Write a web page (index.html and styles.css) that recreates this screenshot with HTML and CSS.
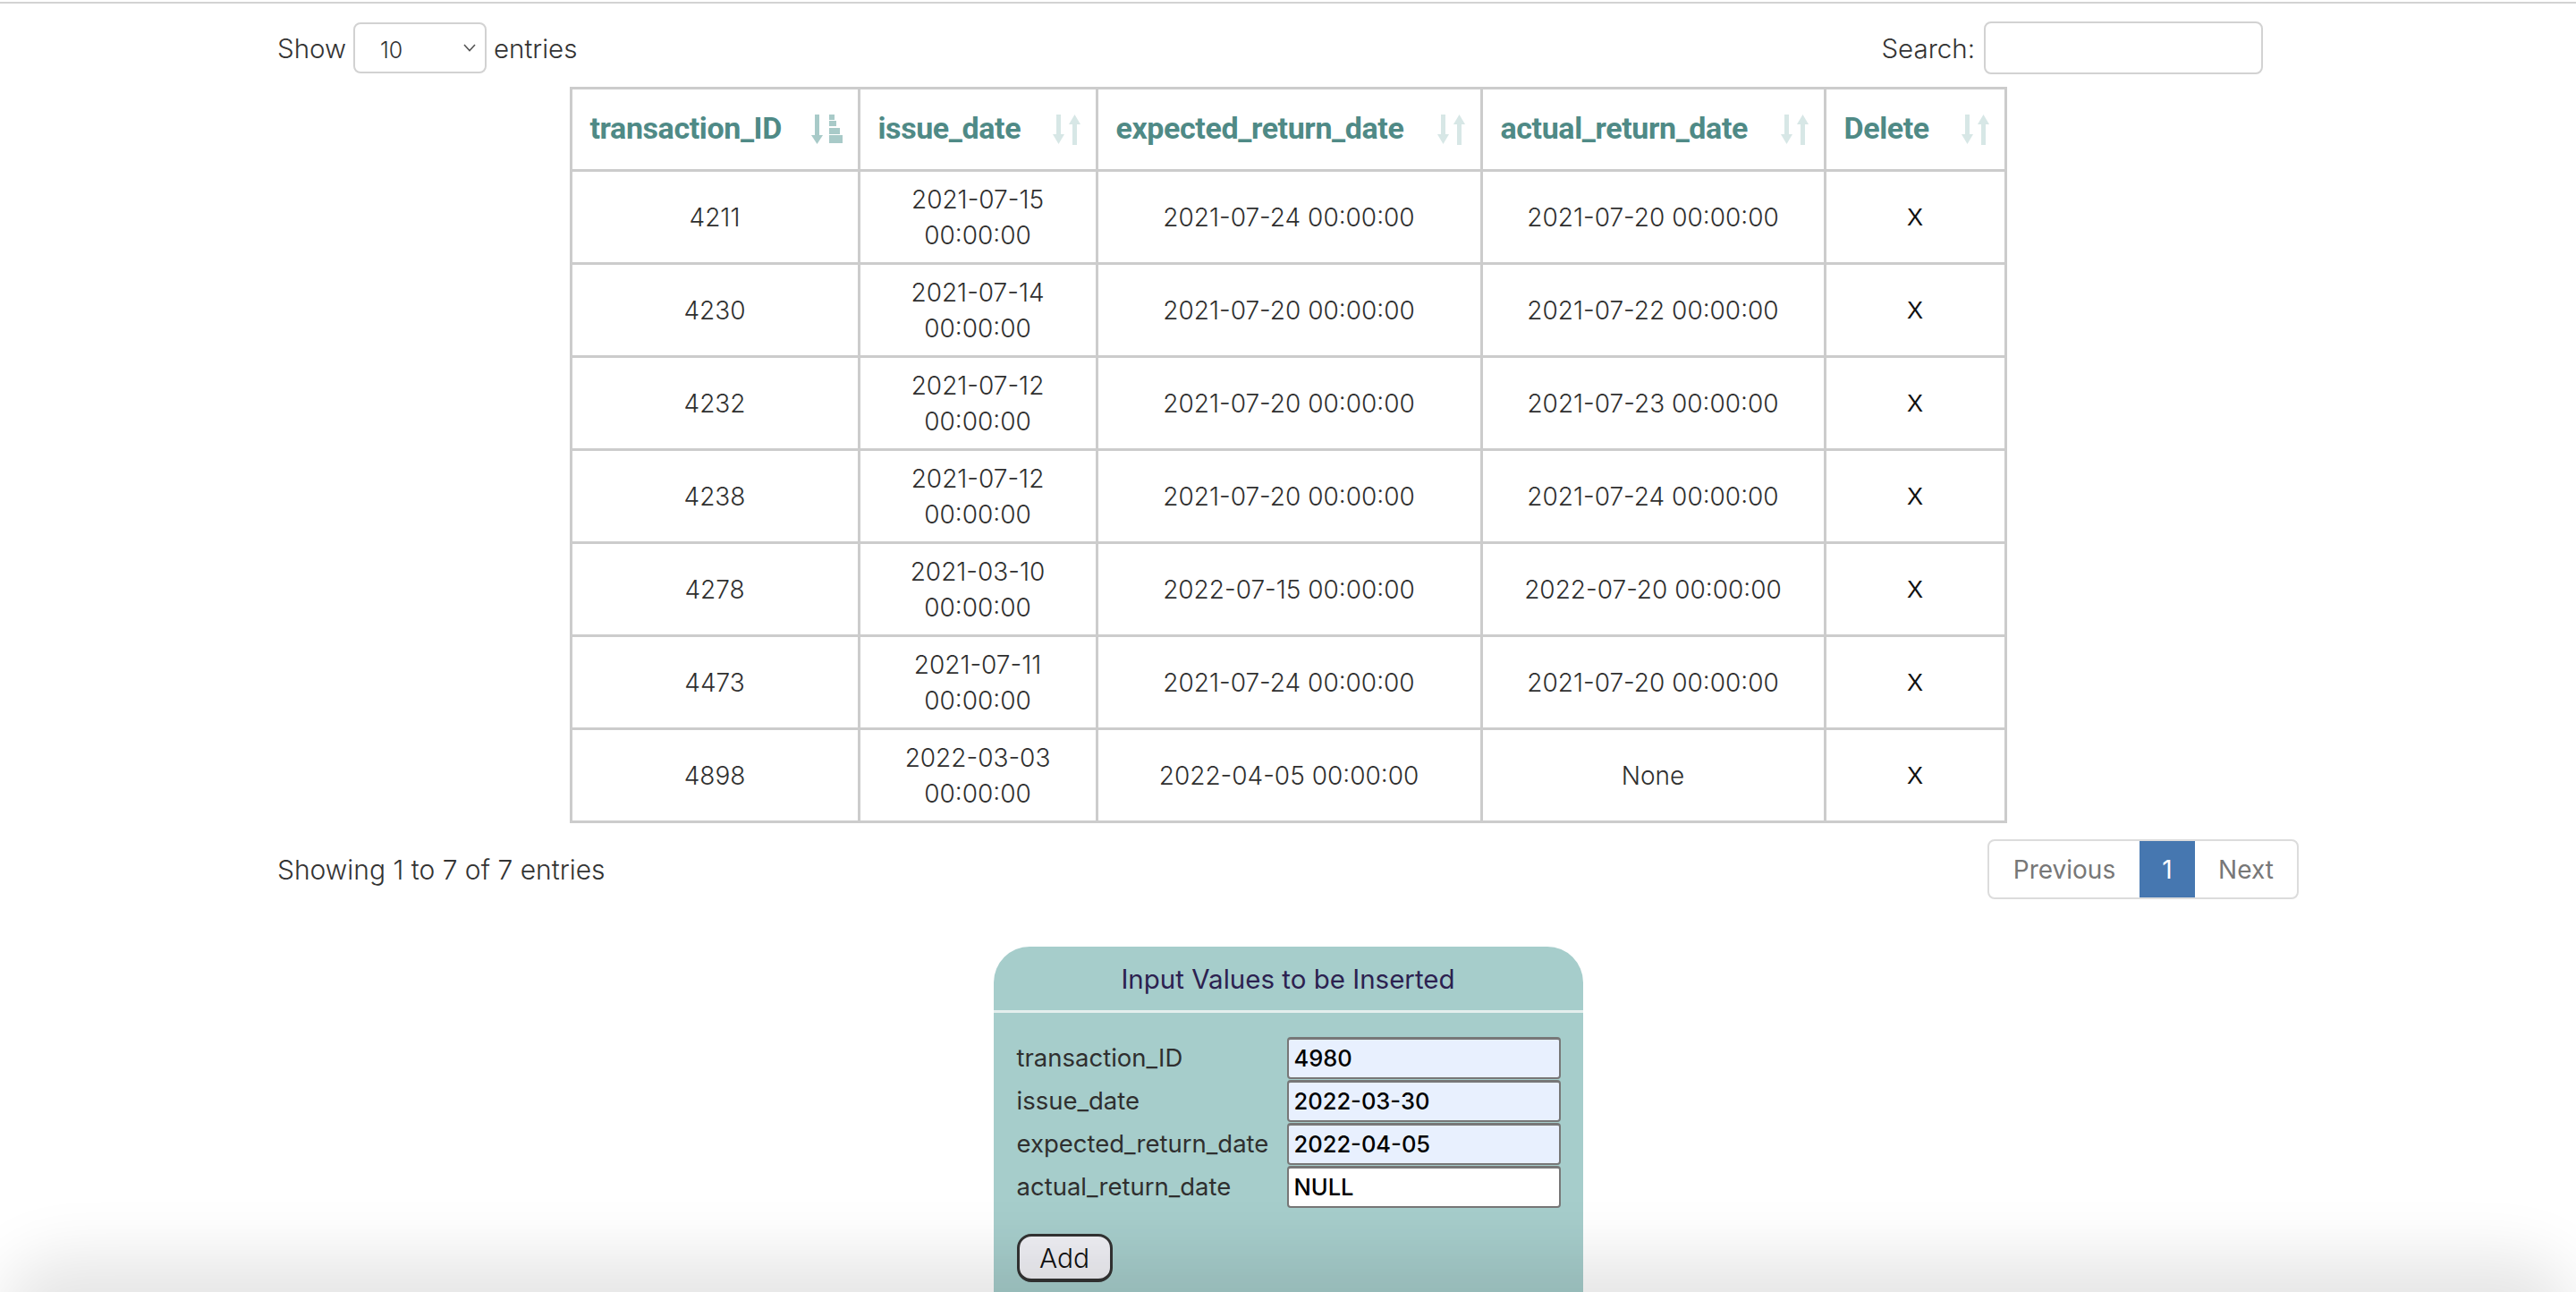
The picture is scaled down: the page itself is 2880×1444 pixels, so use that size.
FILE: index.html
```html
<!DOCTYPE html>
<html>
<head>
<meta charset="utf-8">
<title>Transactions</title>
<link rel="stylesheet" href="styles.css">
</head>
<body>
<div class="topline"></div>
<div class="wrap">
  <div class="controls">
    <label class="len">Show
      <span class="select"><span class="sel-val">10</span>
        <svg class="chev" viewBox="0 0 14 9" width="14" height="9"><path d="M1 1 L7 7.5 L13 1" fill="none" stroke="#555" stroke-width="1.6"/></svg>
      </span>
      entries</label>
    <label class="search">Search: <span class="search-box"></span></label>
  </div>

  <table class="data">
    <colgroup>
      <col class="c1"><col class="c2"><col class="c3"><col class="c4"><col class="c5">
    </colgroup>
    <thead>
      <tr>
        <th><div class="th-in"><span>transaction_ID</span>
          <svg class="sort" viewBox="0 0 36 34" width="36" height="34"><g fill="#a8cac8"><rect x="4" y="0" width="5" height="25"/><polygon points="0,23 13,23 6.5,33"/><rect x="20" y="0" width="6" height="6"/><rect x="20" y="7" width="8" height="6"/><rect x="20" y="15" width="12" height="7"/><rect x="20" y="23" width="15" height="9"/></g></svg></div></th>
        <th><div class="th-in"><span>issue_date</span>
          <svg class="sort" viewBox="0 0 32 34" width="32" height="34"><g fill="#d7e7e6"><rect x="4" y="0" width="5" height="24"/><polygon points="0,22 13,22 6.5,33"/><polygon points="18,11 31,11 24.5,0"/><rect x="22" y="9" width="5" height="25"/></g></svg></div></th>
        <th><div class="th-in"><span>expected_return_date</span>
          <svg class="sort" viewBox="0 0 32 34" width="32" height="34"><g fill="#d7e7e6"><rect x="4" y="0" width="5" height="24"/><polygon points="0,22 13,22 6.5,33"/><polygon points="18,11 31,11 24.5,0"/><rect x="22" y="9" width="5" height="25"/></g></svg></div></th>
        <th><div class="th-in"><span>actual_return_date</span>
          <svg class="sort" viewBox="0 0 32 34" width="32" height="34"><g fill="#d7e7e6"><rect x="4" y="0" width="5" height="24"/><polygon points="0,22 13,22 6.5,33"/><polygon points="18,11 31,11 24.5,0"/><rect x="22" y="9" width="5" height="25"/></g></svg></div></th>
        <th><div class="th-in"><span>Delete</span>
          <svg class="sort" viewBox="0 0 32 34" width="32" height="34"><g fill="#d7e7e6"><rect x="4" y="0" width="5" height="24"/><polygon points="0,22 13,22 6.5,33"/><polygon points="18,11 31,11 24.5,0"/><rect x="22" y="9" width="5" height="25"/></g></svg></div></th>
      </tr>
    </thead>
    <tbody>
      <tr><td>4211</td><td>2021-07-15 00:00:00</td><td>2021-07-24 00:00:00</td><td>2021-07-20 00:00:00</td><td class="x">X</td></tr>
      <tr><td>4230</td><td>2021-07-14 00:00:00</td><td>2021-07-20 00:00:00</td><td>2021-07-22 00:00:00</td><td class="x">X</td></tr>
      <tr><td>4232</td><td>2021-07-12 00:00:00</td><td>2021-07-20 00:00:00</td><td>2021-07-23 00:00:00</td><td class="x">X</td></tr>
      <tr><td>4238</td><td>2021-07-12 00:00:00</td><td>2021-07-20 00:00:00</td><td>2021-07-24 00:00:00</td><td class="x">X</td></tr>
      <tr><td>4278</td><td>2021-03-10 00:00:00</td><td>2022-07-15 00:00:00</td><td>2022-07-20 00:00:00</td><td class="x">X</td></tr>
      <tr><td>4473</td><td>2021-07-11 00:00:00</td><td>2021-07-24 00:00:00</td><td>2021-07-20 00:00:00</td><td class="x">X</td></tr>
      <tr><td>4898</td><td>2022-03-03 00:00:00</td><td>2022-04-05 00:00:00</td><td>None</td><td class="x">X</td></tr>
    </tbody>
  </table>

  <div class="info-row">
    <div class="info">Showing 1 to 7 of 7 entries</div>
    <ul class="pager">
      <li class="prev">Previous</li>
      <li class="active">1</li>
      <li class="next">Next</li>
    </ul>
  </div>

  <div class="form-box">
    <div class="form-title">Input Values to be Inserted</div>
    <div class="form-body">
      <div class="frow"><span class="flabel">transaction_ID</span><span class="finput fill">4980</span></div>
      <div class="frow"><span class="flabel">issue_date</span><span class="finput fill">2022-03-30</span></div>
      <div class="frow"><span class="flabel">expected_return_date</span><span class="finput fill">2022-04-05</span></div>
      <div class="frow"><span class="flabel">actual_return_date</span><span class="finput">NULL</span></div>
      <div class="btn-row"><span class="add-btn">Add</span></div>
    </div>
  </div>
</div>
<div class="bottom-shade"></div>
</body>
</html>
```
FILE: styles.css
```css
html, body {
  margin: 0;
  padding: 0;
  background: #fff;
  height: 1444px;
  overflow: hidden;
}
body {
  font-family: "Inter", "Open Sans", sans-serif;
  color: #333;
  font-size: 28px;
}
.topline {
  height: 2px;
  margin-top: 2px;
  background: #d3d3d3;
}
.wrap {
  width: 2260px;
  margin: 0 auto;
}
.controls {
  display: flex;
  justify-content: space-between;
  align-items: center;
  margin-top: 20px;
  height: 59px;
}
.len, .search {
  display: flex;
  align-items: center;
  gap: 8px;
  font-size: 29.5px;
  font-weight: 300;
}
.select {
  width: 149px;
  height: 57px;
  box-sizing: border-box;
  border: 2px solid #d2d2d2;
  border-radius: 8px;
  display: flex;
  align-items: center;
  justify-content: space-between;
  padding: 0 10px 0 28px;
  font-size: 25px;
}
.sel-val { padding-top: 4px; }
.search { margin-right: 40px; gap: 10px; }
.search-box {
  display: block;
  width: 312px;
  height: 59px;
  box-sizing: border-box;
  border: 2px solid #d2d2d2;
  border-radius: 8px;
}

table.data {
  margin: 14px auto 0;
  width: 1604px;
  table-layout: fixed;
  border-collapse: collapse;
  border: 3px solid #cccccc;
}
col.c1 { width: 322px; }
col.c2 { width: 266px; }
col.c3 { width: 430px; }
col.c4 { width: 384px; }
col.c5 { width: 202px; }
th, td {
  border: 3px solid #cccccc;
}
th {
  height: 89px;
  padding: 0 16px 0 20px;
  text-align: left;
  font-family: "Roboto", "Liberation Sans", sans-serif;
  font-weight: 700;
  font-size: 34px;
  letter-spacing: -0.4px;
  color: #4f8a86;
}
.th-in {
  display: flex;
  justify-content: space-between;
  align-items: center;
}
.th-in span { padding-bottom: 4px; }
.sort { display: block; }
td {
  height: 101px;
  padding: 0 10px;
  text-align: center;
  vertical-align: middle;
  line-height: 40px;
  font-weight: 300;
  color: #2f2f2f;
}
td.x {
  font-family: "Liberation Sans", sans-serif;
  font-weight: 400;
  color: #111;
  font-size: 27px;
}

.info-row {
  display: flex;
  justify-content: space-between;
  align-items: center;
  margin-top: 18px;
}
.info { font-weight: 300; font-size: 30px; }
.pager {
  list-style: none;
  margin: 0;
  padding: 0;
  display: flex;
  border: 2px solid #dcdcdc;
  border-radius: 8px;
  overflow: hidden;
  height: 63px;
}
.pager li {
  display: flex;
  align-items: center;
  justify-content: center;
  font-size: 28px;
  color: #777;
  font-weight: 400;
}
.pager .prev { width: 168px; }
.pager .active { width: 62px; background: #4677b0; color: #fff; }
.pager .next { width: 114px; }

.form-box {
  width: 659px;
  margin: 53px auto 0;
  background: #a6cdcb;
  border-radius: 40px 40px 0 0;
  height: 420px;
}
.form-title {
  height: 71px;
  display: flex;
  align-items: center;
  justify-content: center;
  font-size: 29.5px;
  font-weight: 400;
  color: #2c2150;
  border-bottom: 3px solid #e4eeed;
}
.form-body {
  padding: 26px 25px 0 26px;
}
.frow {
  display: flex;
  align-items: center;
  justify-content: space-between;
  height: 48px;
}
.flabel {
  font-size: 27.5px;
  color: #2f2f2f;
  font-weight: 400;
}
.finput {
  width: 306px;
  height: 47px;
  box-sizing: border-box;
  border: 2px solid #777;
  border-top-width: 3px;
  border-radius: 4px;
  background: #fff;
  display: flex;
  align-items: center;
  padding: 0 6px;
  font-size: 25.5px;
  font-weight: 500;
  color: #000;
}
.finput.fill { background: #e8f0fe; }
.btn-row {
  margin-top: 29px;
}
.add-btn {
  display: inline-flex;
  align-items: center;
  justify-content: center;
  width: 107px;
  height: 54px;
  box-sizing: border-box;
  border: 3px solid #333;
  border-bottom-width: 4px;
  border-radius: 16px;
  background: #efeff4;
  font-size: 30px;
  color: #111;
  font-weight: 300;
}
.bottom-shade {
  position: fixed;
  left: 40px;
  right: 40px;
  bottom: -60px;
  height: 60px;
  border-radius: 60px;
  box-shadow: 0 0 70px 40px rgba(0, 0, 0, 0.1);
  pointer-events: none;
}
```
